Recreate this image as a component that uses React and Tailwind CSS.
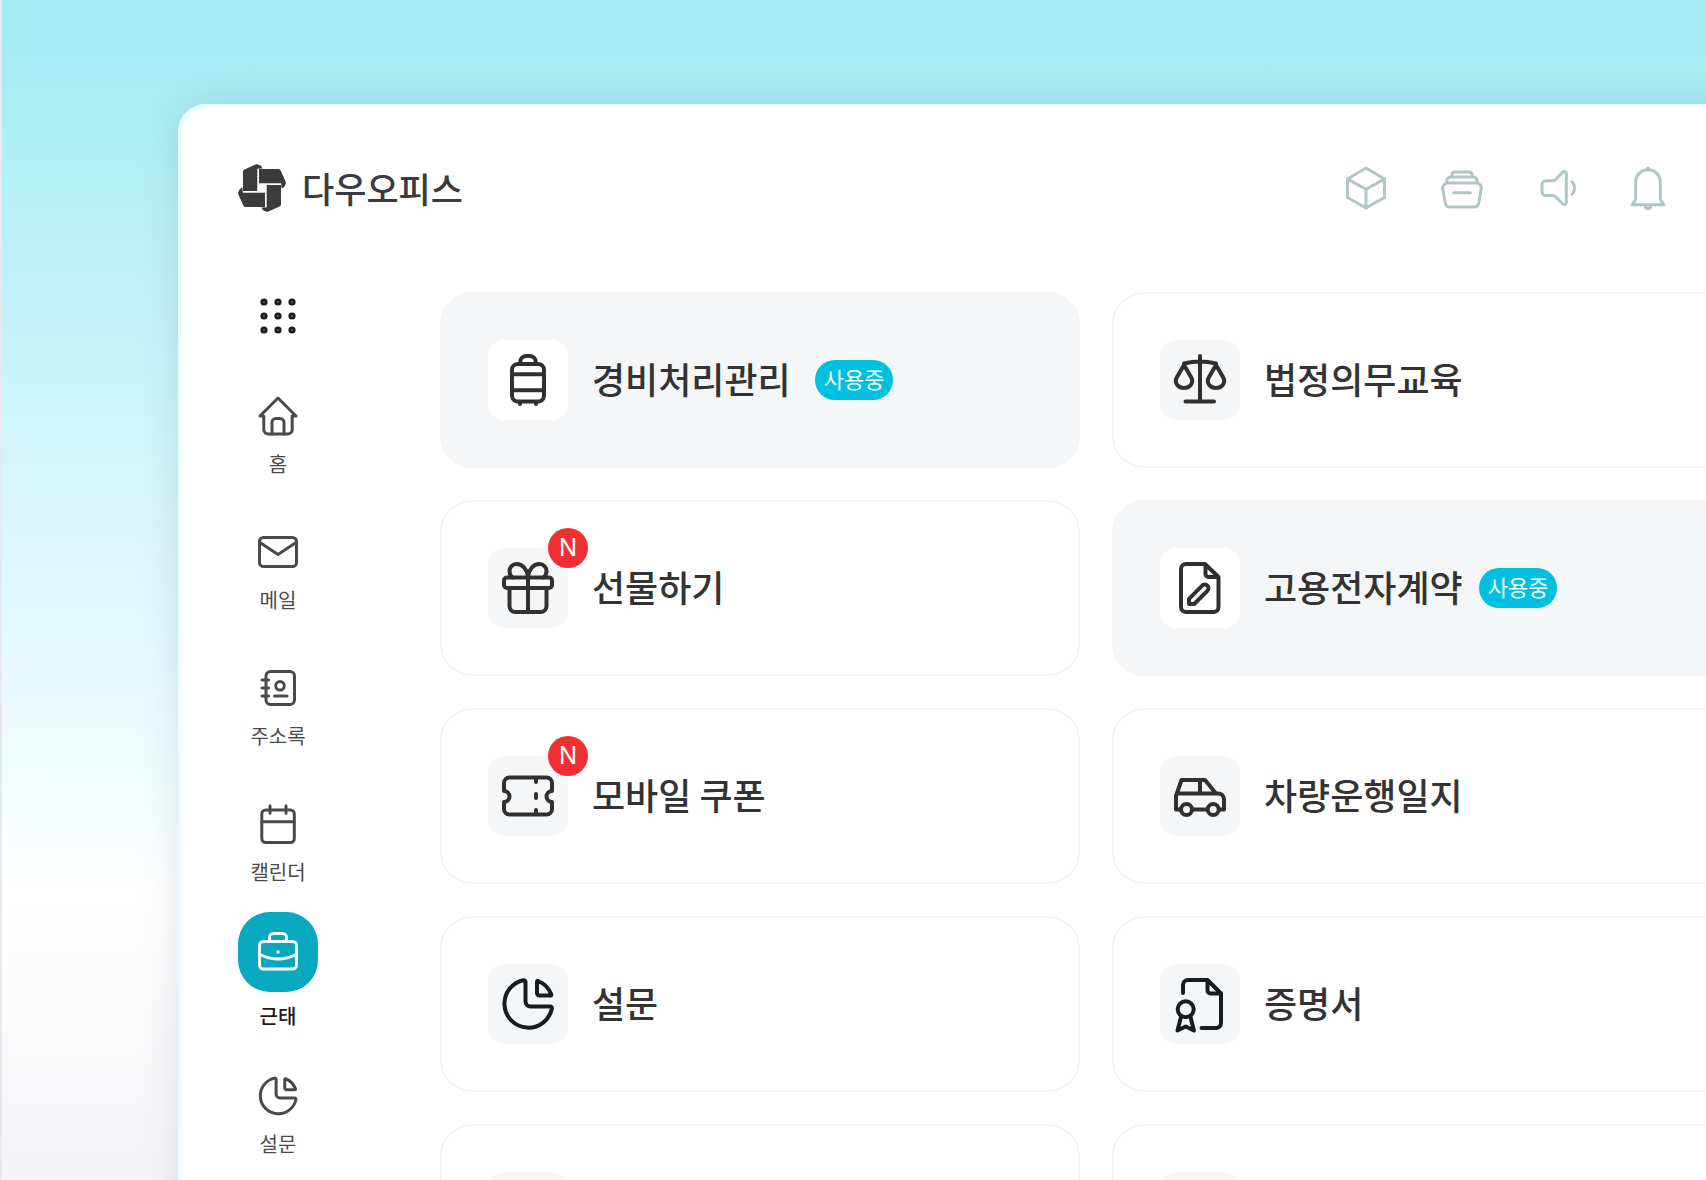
const strokeProps = {
  fill: 'none',
  stroke: 'currentColor',
  strokeLinecap: 'round',
  strokeLinejoin: 'round'
}

const Logo = () => {
  const blade = 'M5 7.500q0-1.500 1.500-2.100L17.500.4q1.200-.5 2.400 0l2 .8q1 .4 1.600 1.400l1 1.800-5.200.4v22.200H5z'

  return (
    <svg viewBox="0 0 48 48" className="size-12 text-[#3a3b3c]" fill="currentColor" aria-hidden="true">
      {[0, 90, 180, 270].map((angle) => (
        <path key={angle} d={blade} transform={`rotate(${angle} 24 24)`} />
      ))}
    </svg>
  )
}

// Icons of the top bar and the side menu, 48px box
const SmallIcon = ({ children, viewBox = '0 0 48 48', strokeWidth = 3, className = 'size-12' }) => (
  <svg viewBox={viewBox} className={className} strokeWidth={strokeWidth} aria-hidden="true" {...strokeProps}>
    {children}
  </svg>
)

// Icons of the app cards, drawn over the whole 80px tile
const TileIcon = ({ children }) => (
  <svg viewBox="0 0 80 80" className="size-20" strokeWidth={4} aria-hidden="true" {...strokeProps}>
    {children}
  </svg>
)

const PieShape = () => (
  <>
    <path d="M37.5 18v19.5a5 5 0 0 0 5 5H62c1.3 0 2.1 1 1.9 2.2A24 24 0 1 1 35.3 16.2c1.2-.2 2.2.6 2.2 1.8z" />
    <path d="M49 18v11a2.5 2.5 0 0 0 2.5 2.5h11c.8 0 1-.5.8-1.1A24 24 0 0 0 50 17c-.5-.3-1 0-1 .6z" />
  </>
)

const headerActions = [
  {
    label: '패키지',
    icon: (
      <SmallIcon>
        <path d="M24 4 5.5 15v18.5L24 44l18.5-10.5V15z" />
        <path d="M5.5 15 24 25.3 42.5 15M24 25.3V44" />
      </SmallIcon>
    )
  },
  {
    label: '보관함',
    icon: (
      <SmallIcon>
        <path d="M9.5 19h29a5 5 0 0 1 4.7 6l-2.5 14a5 5 0 0 1-5 4H12.300a5 5 0 0 1-5-4L4.800 25a5 5 0 0 1 4.7-6z" />
        <path d="M8.8 18.5V17a4 4 0 0 1 4-4h22.4a4 4 0 0 1 4 4v1.5" />
        <path d="M13.8 12.5V11a3 3 0 0 1 3-3h14.4a3 3 0 0 1 3 3v1.5M15.8 28.7h16.5" />
      </SmallIcon>
    )
  },
  {
    label: '소리',
    icon: (
      <SmallIcon>
        <path d="M12 16.7h6.5c1.5 0 2.5-.5 3.5-1.5l6.5-7c1.5-1.5 3.8-.6 3.8 1.4v28.8c0 2-2.3 2.9-3.8 1.4L22 33c-1-1-2-1.5-3.5-1.5H12a4 4 0 0 1-4-4v-6.8a4 4 0 0 1 4-4z" />
        <path d="M38 17.8c3.5 3.5 3.5 9 0 12.5" />
      </SmallIcon>
    )
  },
  {
    label: '알림',
    icon: (
      <SmallIcon viewBox="0 0 36 48" className="h-12 w-9">
        <path d="M18 5.8c-7 0-12.3 5.500-12.3 12.2v17.5L2.2 40.7h31.6l-3.5-5.2V18c0-6.7-5.3-12.2-12.3-12.2z" />
        <path d="M17.5 4h1M15.5 42a2.5 2.4 0 0 0 5 0" />
      </SmallIcon>
    )
  }
]

const menuItems = [
  {
    label: '홈',
    icon: (
      <SmallIcon>
        <path d="M9.8 24v13.5a4.5 4.5 0 0 0 4.5 4.5h19.4a4.5 4.5 0 0 0 4.5-4.5V24H42L24 6 6 24z" />
        <path d="M18 42V30.5a4 4 0 0 1 4-4h4a4 4 0 0 1 4 4V42" />
      </SmallIcon>
    )
  },
  {
    label: '메일',
    icon: (
      <SmallIcon>
        <rect x="5.5" y="9.5" width="37" height="29" rx="4" />
        <path d="m6 14.5 18 12 18-12" />
      </SmallIcon>
    )
  },
  {
    label: '주소록',
    icon: (
      <SmallIcon>
        <rect x="12" y="7.5" width="28.5" height="33" rx="4.5" />
        <path d="M8 16h6.5M8 24h6.5M8 32h6.5M20.5 32H33" />
        <circle cx="26" cy="21.8" r="4.3" />
      </SmallIcon>
    )
  },
  {
    label: '캘린더',
    icon: (
      <SmallIcon>
        <rect x="7.8" y="10" width="32.5" height="32.5" rx="4" />
        <path d="M8 21.8h32M16 5.8v7.5M32 5.8v7.5" />
      </SmallIcon>
    )
  },
  {
    label: '근태',
    active: true,
    icon: (
      <SmallIcon>
        <rect x="5.5" y="13.5" width="37" height="27.5" rx="4" />
        <path d="M15.5 13V9.500a4 4 0 0 1 4-4h9a4 4 0 0 1 4 4V13M6 26.5c12 6 24 6 36 0" />
        <circle cx="24" cy="24" r="1.7" fill="currentColor" stroke="none" />
      </SmallIcon>
    )
  },
  {
    label: '설문',
    icon: (
      <SmallIcon viewBox="8 8 64 64" strokeWidth={4}>
        <PieShape />
      </SmallIcon>
    )
  }
]

const apps = [
  {
    id: 'expense',
    title: '경비처리관리',
    inUse: true,
    gap: 'gap-6',
    icon: (
      <TileIcon>
        <rect x="24" y="24" width="32" height="37.5" rx="6" />
        <path d="M32.3 23.5V22a6 6 0 0 1 6-6h3.4a6 6 0 0 1 6 6v1.5M24 34.3h32M24 50.3h32M32 62v2M48 62v2" />
      </TileIcon>
    )
  },
  {
    id: 'training',
    title: '법정의무교육',
    icon: (
      <TileIcon>
        <path d="M40 16v45.5M25.5 61.5h28.5M24 23.5c5-1.2 11-2 16-2s11 .8 16 2" />
        <path d="m24 25-7 12c-3.3 5.7.8 11 7 11s10.3-5.3 7-11zM56 25l-7 12c-3.3 5.7.8 11 7 11s10.3-5.3 7-11z" />
      </TileIcon>
    )
  },
  {
    id: 'gift',
    title: '선물하기',
    isNew: true,
    icon: (
      <TileIcon>
        <rect x="16" y="29.5" width="48" height="10.5" rx="3" />
        <path d="M21.5 40v18a6 6 0 0 0 6 6h25a6 6 0 0 0 6-6V40M40 29v35" />
        <path d="M40 28c-1-6-5-12-11.5-12a7 7 0 0 0-7 7c0 3 1 5 3 6.5M40 28c1-6 5-12 11.5-12a7 7 0 0 1 7 7c0 3-1 5-3 6.5" />
      </TileIcon>
    )
  },
  {
    id: 'contract',
    title: '고용전자계약',
    inUse: true,
    gap: 'gap-4',
    icon: (
      <TileIcon>
        <path d="M26 16h19l13.5 13v30a5 5 0 0 1-5 5H26a5 5 0 0 1-5-5V21a5 5 0 0 1 5-5z" />
        <path d="M45.5 17v9a3 3 0 0 0 3 3H57M29 50.8l13.2-13.2a3.6 3.6 0 0 1 5.2 5.2L34.2 56H29z" />
      </TileIcon>
    )
  },
  {
    id: 'coupon',
    title: '모바일 쿠폰',
    isNew: true,
    icon: (
      <TileIcon>
        <path d="M21.5 21.5h37a5.5 5.5 0 0 1 5.5 5.5v8a5.5 5.5 0 0 0 0 11v7a5.5 5.5 0 0 1-5.5 5.5h-37A5.5 5.5 0 0 1 16 53v-7a5.5 5.5 0 0 0 0-11v-8a5.5 5.5 0 0 1 5.5-5.5z" />
        <path d="M48 22v4M48 38v4M48 54v4" />
      </TileIcon>
    )
  },
  {
    id: 'vehicle',
    title: '차량운행일지',
    icon: (
      <TileIcon>
        <path d="M20 53.5h-4V40l5.5-16H45l11 13.5h2a6 6 0 0 1 6 6v10h-4M32.5 53.5H47M17 37.5h39M40 24v13" />
        <circle cx="26.5" cy="53.5" r="5.5" />
        <circle cx="53.2" cy="53.5" r="5.5" />
      </TileIcon>
    )
  },
  {
    id: 'survey',
    title: '설문',
    dark: true,
    icon: (
      <TileIcon>
        <PieShape />
      </TileIcon>
    )
  },
  {
    id: 'certificate',
    title: '증명서',
    dark: true,
    icon: (
      <TileIcon>
        <path d="M23 29v-8a5 5 0 0 1 5-5h19.5L61 29.5V59a5 5 0 0 1-5 5H41.5M47.5 17v9.500a3 3 0 0 0 3 3H60" />
        <circle cx="25.7" cy="45.3" r="8" />
        <path d="m21 53-3.5 13.5 8.2-4 8.2 4L30.500 53" />
      </TileIcon>
    )
  },
  { id: 'more-1' },
  { id: 'more-2' }
]

const AppCard = ({ app }) => (
  <a
    href="#"
    className={`flex items-center gap-6 rounded-4xl border-2 p-[46px] ${
      app.inUse ? 'border-[#f4f6f8] bg-[#f4f6f8]' : 'border-[#f2f3f4] bg-white'
    }`}
  >
    <span
      className={`relative size-20 shrink-0 rounded-2xl ${app.inUse ? 'bg-white' : 'bg-[#f4f6f8]'} ${
        app.dark ? 'text-[#1a1b1c]' : 'text-[#303030]'
      }`}
    >
      {app.icon}
      {app.isNew && (
        <span className="absolute -top-5 -right-5 flex size-10 items-center justify-center rounded-full bg-[#ee3030] font-[Inter,sans-serif] text-2xl text-white">
          N
        </span>
      )}
    </span>
    {app.title && (
      <span className={`flex items-center ${app.gap || ''}`}>
        <span className="pb-1 text-4xl font-medium whitespace-nowrap text-[#333]">{app.title}</span>
        {app.inUse && (
          <span className="flex h-10 items-center rounded-full bg-[#00c0df] px-[9px] pb-1 text-[22px] whitespace-nowrap text-white">
            사용중
          </span>
        )}
      </span>
    )}
  </a>
)

const SideMenu = () => (
  <nav className="flex w-20 shrink-0 flex-col items-center gap-12">
    <button type="button" aria-label="전체 메뉴" className="mb-1 text-[#1c1c1c]">
      <svg viewBox="0 0 48 48" className="size-12" fill="#666" stroke="currentColor" strokeWidth="2.6">
        {[10, 24, 38].map((y) => [10, 24, 38].map((x) => <circle key={`${x}-${y}`} cx={x} cy={y} r="2.3" />))}
      </svg>
    </button>
    {menuItems.map((item) => (
      <a
        key={item.label}
        href="#"
        className={`flex flex-col items-center gap-2 ${item.active ? '-mt-6 -mb-2 text-[#1c1c1c]' : 'text-[#4a4a4a]'}`}
      >
        {item.active ? (
          <span className="flex size-20 items-center justify-center rounded-4xl bg-[#08a8c0] text-white">
            {item.icon}
          </span>
        ) : (
          item.icon
        )}
        <span className={`text-xl leading-8 whitespace-nowrap ${item.active ? 'font-medium' : ''}`}>{item.label}</span>
      </a>
    ))}
  </nav>
)

const App = () => (
  <div className="h-screen overflow-hidden border-l-2 border-[#e8e9ee] bg-linear-to-b from-[#a5ebf5] from-3% via-white via-76% to-[#f5f5f8] to-100% pt-[104px] pl-44 font-['Noto_Sans_CJK_KR',sans-serif]">
    {/* The panel runs past the right edge of the window */}
    <div className="-mr-[94px] rounded-tl-[28px] bg-white px-15 pt-15 pr-12 pb-12 shadow-[0_0_40px_rgba(30,50,70,0.12),inset_3px_3px_3px_#e6fcff]">
      <header className="flex items-center justify-between pr-[86px]">
        <a href="#" className="flex items-center gap-4">
          <Logo />
          <span className="text-[35px] leading-12 font-medium text-[#3a3b3c]">다우오피스</span>
        </a>
        <div className="flex items-center gap-12 text-[#b0c6c4]">
          {headerActions.map((action) => (
            <button key={action.label} type="button" aria-label={action.label}>
              {action.icon}
            </button>
          ))}
        </div>
      </header>

      <div className="mt-20 flex gap-[122px]">
        <SideMenu />
        <main className="grid flex-1 grid-cols-2 content-start gap-8">
          {apps.map((app) => (
            <AppCard key={app.id} app={app} />
          ))}
        </main>
      </div>
    </div>
  </div>
)

export default App
